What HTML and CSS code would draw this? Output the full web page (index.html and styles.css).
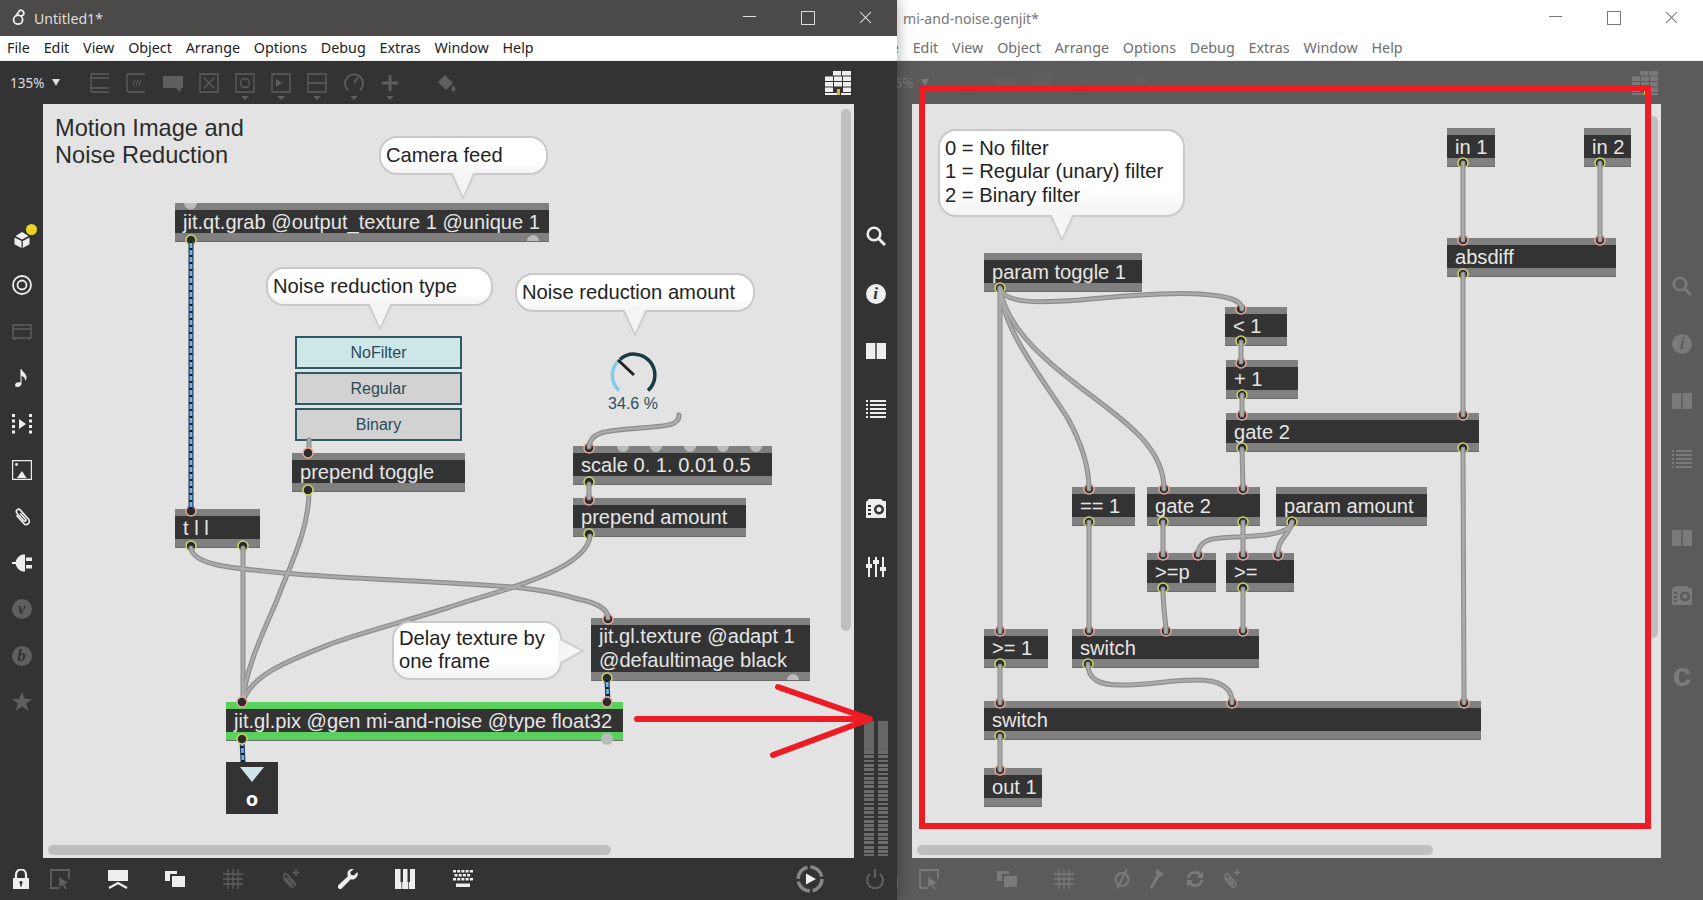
FILE: index.html
```html
<!DOCTYPE html>
<html lang="en">
<head>
    <meta charset="UTF-8">
    <title>Untitled1* - mi-and-noise.genjit*</title>
    <link rel="stylesheet" href="styles.css">
</head>
<body>
    <!-- icon set, reused by both patcher windows -->
    <svg class="icon-defs" aria-hidden="true">
        <symbol id="i-logo" viewBox="0 0 20 20"><circle class="ln" cx="9" cy="13" r="5" stroke-width="2"/><path class="ln" stroke-width="2" d="M6 9.500 11 2.500A3.500 3.500 0 0 1 15 7.500L12 9.500"/></symbol>
        <symbol id="i-cube" viewBox="0 0 20 20"><path d="M3.5 7 10 3l6.5 4L10 10.5zM2.5 8.5l7 3.5v7l-7-3.800zM10.800 12l6.700-3.500v6.700L10.800 19z"/></symbol>
        <symbol id="i-target" viewBox="0 0 20 20"><circle class="ln" cx="10" cy="10" r="9" stroke-width="1.8"/><circle class="ln" cx="10" cy="10" r="4.5" stroke-width="1.8"/></symbol>
        <symbol id="i-amp" viewBox="0 0 20 20"><path class="ln" stroke-width="1.5" d="M1 3h18v13H1zM1 7h18M3 16v2M17 16v2"/></symbol>
        <symbol id="i-note" viewBox="0 0 20 20"><path d="M8.5 1h1c.5 3 5.500 4.500 5 9-.2 1.500-.7 2.500-1.300 3 .5-3-2-4.500-3.700-5.200V15.500c0 2-2 3.500-4 3.500-1.500 0-2.500-.8-2.500-2 0-1.800 2.500-3.300 5.500-2.500z"/></symbol>
        <symbol id="i-video" viewBox="0 0 20 20"><path d="M0 0h3v3H0zM0 5.500h3v3H0zM0 11h3v3H0zM0 16.500h3v3H0zM17 0h3v3h-3zM17 5.500h3v3h-3zM17 11h3v3h-3zM17 16.500h3v3h-3zM7 5l7 5-7 5z"/></symbol>
        <symbol id="i-image" viewBox="0 0 20 20"><path class="ln" stroke-width="1.2" d="M.6.6h18.800v18.800H.6z"/><circle cx="4.5" cy="4.5" r="1.4"/><path d="M5 18h9.500l-4.500-7z"/></symbol>
        <symbol id="i-clip" viewBox="0 0 20 20"><path class="ln" stroke-width="1.6" transform="rotate(-42 10 10)" d="M7 5v11a3.200 3.200 0 0 0 6.400 0V3.800a2.300 2.300 0 0 0-4.600 0V14a1.200 1.200 0 0 0 2.400 0V6"/></symbol>
        <symbol id="i-plug" viewBox="0 0 20 20"><path d="M0 9h3.500c1-3.500 3.500-6.500 7-7.500H13v17h-2.500c-3.500-1-6-4-7-7.500H0zM14 4.500h6V8h-6zM14 12h6v3.500h-6z"/></symbol>
        <symbol id="i-star" viewBox="0 0 20 20"><path d="M10 0l2.800 7H20l-5.800 4.500 2.200 7.500L10 14.600 3.600 19l2.200-7.500L0 7h7.200z"/></symbol>
        <symbol id="i-search" viewBox="0 0 20 20"><circle class="ln" cx="8" cy="8" r="6.3" stroke-width="2.6"/><path class="ln" stroke-width="3" d="M12.500 12.500 19 19"/></symbol>
        <symbol id="i-book" viewBox="0 0 20 20"><path d="M0 2h9.300v16H0zM10.700 2H20v16h-9.300z"/></symbol>
        <symbol id="i-list" viewBox="0 0 20 20"><path d="M0 1h2v2H0zM4 1h16v2H4zM0 5h2v2H0zM4 5h16v2H4zM0 9h2v2H0zM4 9h16v2H4zM0 13h2v2H0zM4 13h16v2H4zM0 17h2v2H0zM4 17h16v2H4z"/></symbol>
        <symbol id="i-camera" viewBox="0 0 20 20"><path fill-rule="evenodd" d="M3 0h12l2 2h3v17H0V3zM13 5.500a5 5 0 1 0 .01 0zM13 8a2.500 2.500 0 1 1-.01 0zM2 6h3v2H2zM2 10h3v2H2zM2 14h3v2H2z"/></symbol>
        <symbol id="i-sliders" viewBox="0 0 20 20"><path d="M2 0h2v7h2v4H4v9H2v-9H0V7h2zM9 0h2v3h2v4h-2v13H9V7H7V3h2zM16 0h2v10h2v4h-2v6h-2v-6h-2v-4h2z"/></symbol>
        <symbol id="i-lock" viewBox="0 0 20 20"><path class="ln" stroke-width="2.2" d="M5 10V5.500a5 5 0 0 1 10 0V10"/><path fill-rule="evenodd" d="M2 9h16v11H2zM10 12a1.600 1.600 0 0 0-.8 3v2.500h1.600V15a1.600 1.600 0 0 0-.8-3z"/></symbol>
        <symbol id="i-select" viewBox="0 0 20 20"><path class="ln" stroke-width="1.8" d="M9 19H1V1h18v9"/><path d="M9 8l9 6-4 1 3 5-2 .5-2.500-5-3 3z"/></symbol>
        <symbol id="i-present" viewBox="0 0 20 20"><path d="M0 1h20v11H0z"/><path class="ln" stroke-width="2.2" d="M1 19l9-5 9 5"/></symbol>
        <symbol id="i-overlap" viewBox="0 0 20 20"><path d="M0 2h12v3H5v7H0zM7 7h13v11H7z"/></symbol>
        <symbol id="i-grid" viewBox="0 0 20 20"><path class="ln" stroke-width="1.3" d="M5 0v20M10 0v20M15 0v20M0 5h20M0 10h20M0 15h20"/></symbol>
        <symbol id="i-clipadd" viewBox="0 0 20 20"><path class="ln" stroke-width="1.5" transform="rotate(-42 9 12)" d="M6.500 7v9.500a2.800 2.800 0 0 0 5.600 0V6a2 2 0 0 0-4 0v9.500a1 1 0 0 0 2 0V8"/><path class="ln" stroke-width="1.5" d="M16 0v7M12.500 3.500h7"/></symbol>
        <symbol id="i-wrench" viewBox="0 0 20 20"><path d="M19.500 3l-3.700 3.500-2.800-.7-.8-2.800L15.700.3c-3.400-1-6.700 1.700-6.200 5.200 0 .7.200 1.300.4 1.800L.6 16a2.300 2.300 0 0 0 3.300 3.300l8.800-9c3.800 1.400 8.300-2.700 6.800-7.300z"/></symbol>
        <symbol id="i-piano" viewBox="0 0 20 20"><path d="M0 0h5.500v13h1v7H0zM8 0h4.500v13h.5v7H7.200v-7h.8zM15 0h5v20h-6.300v-7H15z"/></symbol>
        <symbol id="i-keys" viewBox="0 0 20 20"><path d="M0 1h3v2.500H0zM4.200 1h3v2.500h-3zM8.400 1h3v2.500h-3zM12.600 1h3v2.500h-3zM16.800 1H20v2.500h-3.200zM1.500 5h3v2.500h-3zM5.700 5h3v2.500h-3zM9.900 5h3v2.500h-3zM14.100 5h3v2.500h-3zM0 9h3v2.500H0zM4.200 9h3v2.500h-3zM8.400 9h3v2.500h-3zM12.600 9h3v2.500h-3zM16.800 9H20v2.500h-3.200zM3 14.500h14V18H3z"/></symbol>
        <symbol id="i-playring" viewBox="0 0 28 28"><circle class="ln" cx="14" cy="14" r="12" stroke-width="3.5" stroke-dasharray="16 2.8" opacity=".45"/><path class="bright" d="M10 8.500l10 5.500-10 5.500z"/></symbol>
        <symbol id="i-power" viewBox="0 0 20 20"><path class="ln" stroke-width="2.2" d="M5 5a8 8 0 1 0 10 0M10 0v9"/></symbol>
        <symbol id="i-obj" viewBox="0 0 20 20"><path class="ln" stroke-width="1.3" d="M1 1h18M1 5h18M1 15h18M1 19h18M1 1v18"/></symbol>
        <symbol id="i-msg" viewBox="0 0 20 20"><path class="ln" stroke-width="1.3" d="M19 1H3Q1 1 1 3v14q0 2 2 2h16"/><path class="ln" stroke-width="1" d="M7 13l2-6M10 13l2-6M13 13l2-6"/></symbol>
        <symbol id="i-comment" viewBox="0 0 20 20"><path d="M0 3h20v12h-2l-1 4-4-4H0z"/></symbol>
        <symbol id="i-toggle" viewBox="0 0 20 20"><path class="ln" stroke-width="1.3" d="M1 1h18v18H1zM4.500 4.500l11 11M15.500 4.500l-11 11"/></symbol>
        <symbol id="i-button" viewBox="0 0 20 20"><path class="ln" stroke-width="1.3" d="M1 1h18v18H1z"/><circle class="ln" cx="10" cy="10" r="4.5" stroke-width="1.3"/></symbol>
        <symbol id="i-play" viewBox="0 0 20 20"><path class="ln" stroke-width="1.3" d="M1 1h18v18H1z"/><path d="M5 6l6 4-6 4z"/></symbol>
        <symbol id="i-minus" viewBox="0 0 20 20"><path class="ln" stroke-width="1.3" d="M1 1h18v18H1zM1 10h18"/></symbol>
        <symbol id="i-dial" viewBox="0 0 20 20"><path class="ln" stroke-width="1.8" d="M4 17A9 9 0 1 1 16 17M10 10l4-6"/></symbol>
        <symbol id="i-plus" viewBox="0 0 20 20"><path class="ln" stroke-width="3" d="M10 2v16M2 10h16"/></symbol>
        <symbol id="i-bucket" viewBox="0 0 20 20"><path d="M8 2l8 8-7 7-8-8zM16 12c1.500 2 2.500 3.500 2.500 4.500a2 2 0 0 1-4 0c0-1 .5-2.500 1.500-4.500z"/></symbol>
        <symbol id="i-mute" viewBox="0 0 20 20"><circle class="ln" cx="10" cy="10.5" r="6.5" stroke-width="2.2"/><path class="ln" stroke-width="2" d="M15 0 5 20"/></symbol>
        <symbol id="i-hammer" viewBox="0 0 20 20"><path d="M9 0l7 5-3 3-1.200-.8L4 20l-2.500-1.500L9 5.500 7 4z"/></symbol>
        <symbol id="i-sync" viewBox="0 0 20 20"><path class="ln" stroke-width="2.6" d="M3 9a7 7 0 0 1 13-2M17 11a7 7 0 0 1-13 2"/><path d="M18 2v7h-6zM2 18v-7h6z"/></symbol>
        <symbol id="i-gridlist" viewBox="0 0 26 24"><path d="M8 0h8v4.500H8zM17 0h9v4.500h-9zM0 5.500h8V10H0zM9 5.500h8V10H9zM18 5.500h8V10h-8zM0 11h8v4.500H0zM9 11h8v4.500H9zM18 11h8v4.500h-8zM0 16.500h8V21H0zM18 16.500h8V21h-8zM0 22h12v2H0zM16 22h10v2H16z"/><path class="badge" d="M12 18h3v6h-3z"/></symbol>
    </svg>

    <!-- main patcher -->
    <div class="window window-main">
        <div class="titlebar">
            <svg class="logo"><use href="#i-logo"/></svg>
            <span class="title">Untitled1*</span>
            <div class="winbtns">
                <span class="winbtn win-min"></span>
                <span class="winbtn win-max"></span>
                <span class="winbtn win-close"></span>
            </div>
        </div>
        <div class="menubar">
            <span>File</span><span>Edit</span><span>View</span><span>Object</span><span>Arrange</span><span>Options</span><span>Debug</span><span>Extras</span><span>Window</span><span>Help</span>
        </div>
        <div class="toolbar">
            <div class="zoom-level">135% <i class="caret"></i></div>
            <div class="tool"><svg><use href="#i-obj"/></svg></div>
            <div class="tool"><svg><use href="#i-msg"/></svg></div>
            <div class="tool"><svg><use href="#i-comment"/></svg></div>
            <div class="tool"><svg><use href="#i-toggle"/></svg></div>
            <div class="tool more"><svg><use href="#i-button"/></svg></div>
            <div class="tool more"><svg><use href="#i-play"/></svg></div>
            <div class="tool more"><svg><use href="#i-minus"/></svg></div>
            <div class="tool more"><svg><use href="#i-dial"/></svg></div>
            <div class="tool more"><svg><use href="#i-plus"/></svg></div>
            <div class="tool tool-bucket"><svg><use href="#i-bucket"/></svg></div>
            <svg class="gridlist"><use href="#i-gridlist"/></svg>
        </div>
        <div class="middle">
            <div class="sidebar sidebar-left">
                <div class="side-icon cube"><svg><use href="#i-cube"/></svg><i class="dot"></i></div>
                <div class="side-icon"><svg><use href="#i-target"/></svg></div>
                <div class="side-icon off"><svg><use href="#i-amp"/></svg></div>
                <div class="side-icon"><svg><use href="#i-note"/></svg></div>
                <div class="side-icon"><svg><use href="#i-video"/></svg></div>
                <div class="side-icon"><svg><use href="#i-image"/></svg></div>
                <div class="side-icon"><svg><use href="#i-clip"/></svg></div>
                <div class="side-icon"><svg><use href="#i-plug"/></svg></div>
                <div class="side-icon badge-letter">v</div>
                <div class="side-icon badge-letter">b</div>
                <div class="side-icon off"><svg><use href="#i-star"/></svg></div>
            </div>

            <div class="canvas canvas-main">
                <div class="obj o-grab">jit.qt.grab @output_texture 1 @unique 1</div>
                <div class="obj o-trig">t l l</div>
                <div class="obj o-ptoggle">prepend toggle</div>
                <div class="obj o-pamount">prepend amount</div>
                <div class="obj o-scale">scale 0. 1. 0.01 0.5</div>
                <div class="obj o-texture">jit.gl.texture @adapt 1<br>@defaultimage black</div>
                <div class="obj o-pix">jit.gl.pix @gen mi-and-noise @type float32</div>
                <div class="tabs">
                    <div class="tab tab-on">NoFilter</div>
                    <div class="tab">Regular</div>
                    <div class="tab">Binary</div>
                </div>
                <div class="pwin"><i class="pwin-arrow"></i><span>o</span></div>

                <svg class="cords" viewBox="43 104 811 754">
                    <defs>
                        <g id="cords-main">
                            <path d="M191 548C193 565 230 568 283 573S400 580 450 583 540 587 578 599C598 603 608 610 608 618"/>
                            <path d="M243 548V702"/>
                            <path d="M309 491C309 530 290 565 277 600 262 635 245 670 243 702"/>
                            <path d="M590 536C588 558 550 575 513 587 490 595 470 600 450 607 410 620 370 630 333 643 290 660 250 675 243 702"/>
                            <path d="M679 415C680 427 660 426 640 428 610 431 590 430 589 447"/>
                            <path d="M589 484V498"/>
                            <path d="M309 440V453"/>
                        </g>
                        <g id="jitter-main">
                            <path d="M191 241V509"/>
                            <path d="M607 680 608 702"/>
                            <path d="M242 739 243 762"/>
                        </g>
                    </defs>
                    <path class="handle" d="M184 203a6.500 6.500 0 0 0 13 0zM527 241a6 6 0 0 1 12 0zM617 446a6 6 0 0 0 12 0zM650 446a6 6 0 0 0 12 0zM684 446a6 6 0 0 0 12 0zM717 446a6 6 0 0 0 12 0zM750 446a6 6 0 0 0 12 0zM787 680a6 6 0 0 1 12 0z"/>
                    <circle class="handle" cx="607" cy="739" r="6"/>
                    <circle class="pin" cx="191" cy="511" r="5"/>
                    <circle class="pout" cx="191" cy="240" r="5"/>
                    <circle class="pout" cx="191" cy="546" r="5"/>
                    <circle class="pout" cx="243" cy="546" r="5"/>
                    <circle class="pin" cx="589" cy="448" r="5"/>
                    <circle class="pout" cx="589" cy="482" r="5"/>
                    <circle class="pin" cx="589" cy="500" r="5"/>
                    <circle class="pout" cx="589" cy="534" r="5"/>
                    <circle class="pin" cx="608" cy="619" r="5"/>
                    <circle class="pout" cx="607" cy="678" r="5"/>
                    <use href="#cords-main" class="cord-outer"/>
                    <use href="#cords-main" class="cord-inner"/>
                    <use href="#jitter-main" class="jit-outer"/>
                    <use href="#jitter-main" class="jit-inner"/>
                    <use href="#jitter-main" class="jit-dash"/>
                    <circle class="pin" cx="308" cy="453" r="5"/>
                    <circle class="pout" cx="308" cy="490" r="5"/>
                    <circle class="pin" cx="242" cy="702" r="5"/>
                    <circle class="pout" cx="242" cy="739" r="5"/>
                    <circle class="pin" cx="607" cy="702" r="5"/>

                    <path class="dial-track" d="M620 359.500A20.500 20.500 0 0 1 648 390.500"/>
                    <path class="dial-value" d="M619 390.500A20.500 20.500 0 0 1 620 359.500"/>
                    <path class="dial-needle" d="M618 360 634 375"/>
                    <text class="dial-text" x="633" y="409" text-anchor="middle">34.6 %</text>
                </svg>

                <div class="patch-title">Motion Image and<br>Noise Reduction</div>
                <div class="bubble b-camera">Camera feed</div>
                <div class="bubble b-type">Noise reduction type</div>
                <div class="bubble b-amount">Noise reduction amount</div>
                <div class="bubble b-delay">Delay texture by<br>one frame</div>

                <div class="scroll-v"></div>
                <div class="scroll-h"></div>
            </div>

            <div class="sidebar sidebar-right">
                <div class="side-icon"><svg><use href="#i-search"/></svg></div>
                <div class="side-icon info">i</div>
                <div class="side-icon"><svg><use href="#i-book"/></svg></div>
                <div class="side-icon"><svg><use href="#i-list"/></svg></div>
                <div class="side-icon after-break"><svg><use href="#i-camera"/></svg></div>
                <div class="side-icon"><svg><use href="#i-sliders"/></svg></div>
                <div class="meter"><i></i><i></i></div>
            </div>
        </div>
        <div class="bottombar">
            <svg class="bot"><use href="#i-lock"/></svg>
            <svg class="bot off bot-select"><use href="#i-select"/></svg>
            <svg class="bot"><use href="#i-present"/></svg>
            <svg class="bot"><use href="#i-overlap"/></svg>
            <svg class="bot off"><use href="#i-grid"/></svg>
            <svg class="bot off"><use href="#i-clipadd"/></svg>
            <svg class="bot"><use href="#i-wrench"/></svg>
            <svg class="bot"><use href="#i-piano"/></svg>
            <svg class="bot"><use href="#i-keys"/></svg>
            <svg class="bot-play"><use href="#i-playring"/></svg>
            <svg class="bot off bot-power"><use href="#i-power"/></svg>
        </div>
    </div>

    <!-- gen patcher, behind the main one -->
    <div class="window window-gen">
        <div class="titlebar">
            <span class="title">mi-and-noise.genjit*</span>
            <div class="winbtns">
                <span class="winbtn win-min"></span>
                <span class="winbtn win-max"></span>
                <span class="winbtn win-close"></span>
            </div>
        </div>
        <div class="menubar">
            <span>File</span><span>Edit</span><span>View</span><span>Object</span><span>Arrange</span><span>Options</span><span>Debug</span><span>Extras</span><span>Window</span><span>Help</span>
        </div>
        <div class="toolbar">
            <div class="zoom-level">135% <i class="caret"></i></div>
            <div class="tool"><svg><use href="#i-obj"/></svg></div>
            <div class="tool"><svg viewBox="0 0 20 20"><path d="M0 4h20v12H0z"/></svg></div>
            <div class="tool"><svg viewBox="0 0 20 20"><path fill-rule="evenodd" d="M0 0h20v18H0zM5 3h2v2H5zM13 3h2v2h-2z"/></svg></div>
            <div class="tool"><svg viewBox="0 0 20 20"><path class="ln" stroke-width="1.3" d="M1 1h18v18H1z"/><text class="co" x="10" y="10" text-anchor="middle">CO</text></svg></div>
            <div class="tool tool-bucket gen-bucket"><svg><use href="#i-bucket"/></svg></div>
            <svg class="gridlist"><use href="#i-gridlist"/></svg>
        </div>
        <div class="middle">
            <div class="sidebar sidebar-left"></div>

            <div class="canvas canvas-gen">
                <div class="obj g-ptoggle">param toggle 1</div>
                <div class="obj g-in1">in 1</div>
                <div class="obj g-in2">in 2</div>
                <div class="obj g-absdiff">absdiff</div>
                <div class="obj g-lt">&lt; 1</div>
                <div class="obj g-plus">+ 1</div>
                <div class="obj g-gatelong">gate 2</div>
                <div class="obj g-eq">== 1</div>
                <div class="obj g-gate">gate 2</div>
                <div class="obj g-pamount">param amount</div>
                <div class="obj g-gep">&gt;=p</div>
                <div class="obj g-ge">&gt;=</div>
                <div class="obj g-ge1">&gt;= 1</div>
                <div class="obj g-switch">switch</div>
                <div class="obj g-switchlong">switch</div>
                <div class="obj g-out">out 1</div>

                <svg class="cords" viewBox="912 104 749 754">
                    <defs>
                        <g id="cords-gen">
                            <path d="M1000 288V632"/>
                            <path d="M1000 288C1003 330 1040 375 1067 417 1080 440 1089 465 1089 489"/>
                            <path d="M1000 288C1006 330 1050 365 1093 397 1130 425 1164 450 1164 489"/>
                            <path d="M1000 288C1004 304 1040 303 1080 300 1120 296 1170 292 1200 294 1228 296 1242 300 1242 309"/>
                            <path d="M1241 342V362"/>
                            <path d="M1242 395V415"/>
                            <path d="M1242 449 1243 489"/>
                            <path d="M1463 163V240"/>
                            <path d="M1600 163V240"/>
                            <path d="M1463 274V415"/>
                            <path d="M1463 449 1464 703"/>
                            <path d="M1089 522V631"/>
                            <path d="M1163 522V555"/>
                            <path d="M1243 522V555"/>
                            <path d="M1292 522C1290 538 1240 536 1220 538 1204 539 1198 545 1198 555"/>
                            <path d="M1292 522C1290 535 1276 540 1278 555"/>
                            <path d="M1163 589C1163 610 1166 620 1166 632"/>
                            <path d="M1243 589V631"/>
                            <path d="M1088 664C1088 680 1100 685 1120 685 1150 685 1170 680 1197 680 1220 680 1233 688 1232 703"/>
                            <path d="M1000 666V703"/>
                            <path d="M1000 736V770"/>
                        </g>
                    </defs>
                    <circle class="pout" cx="1000" cy="288" r="5"/>
                    <circle class="pin" cx="1241" cy="309" r="5"/>
                    <circle class="pout" cx="1241" cy="341" r="5"/>
                    <circle class="pin" cx="1241" cy="363" r="5"/>
                    <circle class="pout" cx="1242" cy="395" r="5"/>
                    <circle class="pin" cx="1242" cy="415" r="5"/>
                    <circle class="pin" cx="1463" cy="415" r="5"/>
                    <circle class="pout" cx="1242" cy="448" r="5"/>
                    <circle class="pout" cx="1463" cy="448" r="5"/>
                    <circle class="pout" cx="1463" cy="163" r="5"/>
                    <circle class="pout" cx="1600" cy="163" r="5"/>
                    <circle class="pin" cx="1463" cy="240" r="5"/>
                    <circle class="pin" cx="1600" cy="240" r="5"/>
                    <circle class="pout" cx="1463" cy="274" r="5"/>
                    <circle class="pin" cx="1089" cy="489" r="5"/>
                    <circle class="pin" cx="1164" cy="489" r="5"/>
                    <circle class="pin" cx="1243" cy="489" r="5"/>
                    <circle class="pout" cx="1089" cy="522" r="5"/>
                    <circle class="pout" cx="1163" cy="522" r="5"/>
                    <circle class="pout" cx="1243" cy="522" r="5"/>
                    <circle class="pout" cx="1292" cy="522" r="5"/>
                    <circle class="pin" cx="1163" cy="555" r="5"/>
                    <circle class="pin" cx="1198" cy="555" r="5"/>
                    <circle class="pin" cx="1243" cy="555" r="5"/>
                    <circle class="pin" cx="1278" cy="555" r="5"/>
                    <circle class="pout" cx="1163" cy="588" r="5"/>
                    <circle class="pout" cx="1243" cy="588" r="5"/>
                    <circle class="pin" cx="1000" cy="631" r="5"/>
                    <circle class="pin" cx="1089" cy="631" r="5"/>
                    <circle class="pin" cx="1166" cy="631" r="5"/>
                    <circle class="pin" cx="1243" cy="631" r="5"/>
                    <circle class="pout" cx="1000" cy="664" r="5"/>
                    <circle class="pout" cx="1088" cy="664" r="5"/>
                    <circle class="pin" cx="1000" cy="703" r="5"/>
                    <circle class="pin" cx="1232" cy="703" r="5"/>
                    <circle class="pin" cx="1464" cy="703" r="5"/>
                    <circle class="pout" cx="1000" cy="736" r="5"/>
                    <circle class="pin" cx="1000" cy="770" r="5"/>
                    <use href="#cords-gen" class="cord-outer"/>
                    <use href="#cords-gen" class="cord-inner"/>
                </svg>

                <div class="bubble b-filter">0 = No filter<br>1 = Regular (unary) filter<br>2 = Binary filter</div>

                <div class="scroll-v"></div>
                <div class="scroll-h"></div>
            </div>

            <div class="sidebar sidebar-right">
                <div class="side-icon"><svg><use href="#i-search"/></svg></div>
                <div class="side-icon info">i</div>
                <div class="side-icon"><svg><use href="#i-book"/></svg></div>
                <div class="side-icon"><svg><use href="#i-list"/></svg></div>
                <div class="side-icon after-break"><svg><use href="#i-book"/></svg></div>
                <div class="side-icon"><svg><use href="#i-camera"/></svg></div>
                <div class="side-icon after-break c-letter">c</div>
            </div>
        </div>
        <div class="bottombar">
            <svg class="bot"><use href="#i-lock"/></svg>
            <svg class="bot bot-select"><use href="#i-select"/></svg>
            <svg class="bot gen-overlap"><use href="#i-overlap"/></svg>
            <svg class="bot"><use href="#i-grid"/></svg>
            <svg class="bot"><use href="#i-mute"/></svg>
            <svg class="bot gen-tight"><use href="#i-hammer"/></svg>
            <svg class="bot gen-tight"><use href="#i-sync"/></svg>
            <svg class="bot gen-tight"><use href="#i-clipadd"/></svg>
        </div>
    </div>

    <!-- red annotations drawn on top of the screenshot -->
    <svg class="annotations" viewBox="0 0 1703 900">
        <rect class="red-frame" x="922" y="88" width="726" height="738"/>
        <path class="red-arrow" d="M637 719H870M778 687 870 719 773 755"/>
    </svg>
</body>
</html>
```
FILE: styles.css
```css
* {
    box-sizing: border-box;
}

body {
    margin: 0;
    width: 1703px;
    height: 900px;
    display: flex;
    position: relative;
    overflow: hidden;
    font-family: "Liberation Sans", Arial, sans-serif;
    background: #5b5b5b;
}

.icon-defs {
    position: absolute;
    width: 0;
    height: 0;
}

.ln {
    fill: none;
    stroke: currentColor;
}

/* windows */
.window {
    height: 900px;
    display: flex;
    flex-direction: column;
    flex: none;
}

.window-main {
    width: 897px;
    position: relative;
    z-index: 2;
    color: #eee;
    background: #333;
    box-shadow: 0 0 14px rgba(0, 0, 0, 0.35);
}

.window-gen {
    width: 834px;
    margin-left: -28px;
    color: #7a7a7a;
    background: #5b5b5b;
}

.titlebar {
    height: 36px;
    display: flex;
    align-items: center;
    padding-left: 34px;
    position: relative;
    font-family: "Noto Sans", sans-serif;
    font-size: 14.1px;
}

.window-main .titlebar {
    background: #4c4a48;
    color: #ddd;
}

.window-gen .titlebar {
    background: #fff;
    color: #777;
}

.logo {
    position: absolute;
    left: 10px;
    top: 8px;
    width: 18px;
    height: 18px;
    color: #eee;
}

.winbtns {
    margin-left: auto;
    display: flex;
    padding-right: 2px;
}

.winbtn {
    width: 58px;
    height: 36px;
    display: block;
    position: relative;
}

.winbtn::before,
.winbtn::after {
    content: "";
    position: absolute;
}

.win-min::before {
    left: 22px;
    top: 16px;
    width: 13px;
    height: 1px;
    background: currentColor;
}

.win-max::before {
    left: 22px;
    top: 11px;
    width: 12px;
    height: 12px;
    border: 1px solid currentColor;
}

.win-close::before,
.win-close::after {
    left: 21px;
    top: 17px;
    width: 15px;
    height: 1px;
    background: currentColor;
    transform: rotate(45deg);
}

.win-close::after {
    transform: rotate(-45deg);
}

.menubar {
    height: 25px;
    display: flex;
    align-items: center;
    gap: 13.8px;
    padding: 0 0 2px 7px;
    background: #fff;
    border-bottom: 1px solid #eee;
    font-family: "Noto Sans", sans-serif;
    font-size: 14.3px;
    color: #222;
    white-space: nowrap;
}

.window-gen .menubar {
    color: #6e6e6e;
}

/* toolbar */
.toolbar {
    height: 43px;
    display: flex;
    align-items: center;
    gap: 16.2px;
    color: #5f5f5f;
    position: relative;
}

.zoom-level {
    width: 74px;
    padding-left: 10px;
    font-family: "Noto Sans", sans-serif;
    font-size: 13.5px;
    color: #ddd;
    display: flex;
    align-items: center;
    gap: 8px;
}

.window-gen .zoom-level {
    color: #7a7a7a;
}

.caret {
    width: 0;
    height: 0;
    border-left: 4px solid transparent;
    border-right: 4px solid transparent;
    border-top: 7px solid currentColor;
}

.tool {
    width: 20px;
    height: 20px;
    position: relative;
    flex: none;
}

.tool svg {
    width: 20px;
    height: 20px;
    display: block;
    fill: currentColor;
}

.tool.more::after {
    content: "";
    position: absolute;
    left: 6px;
    top: 23px;
    border-left: 4px solid transparent;
    border-right: 4px solid transparent;
    border-top: 4px solid currentColor;
}

.tool-bucket {
    margin-left: 21px;
}

.gen-bucket {
    margin-left: 27px;
    margin-top: -6px;
}

.co {
    font-size: 8px;
    fill: currentColor;
}

.gridlist {
    position: absolute;
    right: 46px;
    top: 10px;
    width: 26px;
    height: 24px;
    fill: #eee;
}

.window-gen .gridlist {
    right: 45px;
    fill: #7a7a7a;
}

.badge {
    fill: #d9b92f;
}

.window-gen .badge {
    fill: #7a7a7a;
}

/* middle row */
.middle {
    flex: 1;
    display: flex;
    min-height: 0;
}

.sidebar {
    flex: none;
    display: flex;
    flex-direction: column;
    align-items: center;
}

.sidebar-left {
    width: 43px;
    padding-top: 125px;
    gap: 26.3px;
}

.sidebar-right {
    width: 43px;
    padding-top: 122px;
    gap: 37.5px;
}

.window-gen .sidebar-right {
    width: 42px;
    padding-top: 172px;
}

.side-icon {
    width: 20px;
    height: 20px;
    position: relative;
    flex: none;
}

.side-icon svg {
    width: 20px;
    height: 20px;
    display: block;
    fill: currentColor;
}

.side-icon.off {
    color: #5f5f5f;
}

.after-break {
    margin-top: 43px;
}

.window-gen .after-break {
    margin-top: 22px;
}

.dot {
    position: absolute;
    right: -5px;
    top: -5px;
    width: 11px;
    height: 11px;
    border-radius: 50%;
    background: #eed21f;
}

.badge-letter {
    border-radius: 50%;
    background: #5f5f5f;
    color: #333;
    font: italic bold 17px/19px "Liberation Serif", serif;
    text-align: center;
}

.info {
    border-radius: 50%;
    background: #eee;
    color: #333;
    font: italic bold 17px/20px "Liberation Serif", serif;
    text-align: center;
}

.window-gen .info {
    background: #7a7a7a;
    color: #5b5b5b;
}

.c-letter {
    font: bold 34px/18px "Liberation Sans", sans-serif;
    text-align: center;
}

.meter {
    margin-top: auto;
    margin-bottom: 2px;
    display: flex;
    gap: 4px;
}

.meter i {
    display: block;
    width: 10px;
    height: 135px;
    background:
        linear-gradient(#666 30px, transparent 30px),
        repeating-linear-gradient(#6c6c6c 0, #6c6c6c 2.8px, #333 2.8px, #333 4.3px);
}

/* canvas */
.canvas {
    flex: 1;
    position: relative;
    background: #e3e3e3;
    overflow: hidden;
}

.scroll-v {
    position: absolute;
    right: 3px;
    top: 5px;
    width: 10px;
    height: 522px;
    border-radius: 5px;
    background: #bfbfbf;
}

.scroll-h {
    position: absolute;
    left: 5px;
    bottom: 3px;
    width: 563px;
    height: 10px;
    border-radius: 5px;
    background: #bfbfbf;
}

.canvas-gen .scroll-v {
    top: 12px;
}

.canvas-gen .scroll-h {
    width: 516px;
}

.cords {
    position: absolute;
    left: 0;
    top: 0;
    width: 100%;
    height: 100%;
}

.cords path {
    fill: none;
}

.cord-outer {
    stroke: #8d8d8d;
    stroke-width: 5px;
    fill: none;
    stroke-linecap: round;
}

.cord-inner {
    stroke: #ababab;
    stroke-width: 2.6px;
    fill: none;
    stroke-linecap: round;
}

.jit-outer {
    stroke: #1f3f60;
    stroke-width: 5px;
    fill: none;
}

.jit-inner {
    stroke: #7db3e4;
    stroke-width: 2.6px;
    fill: none;
}

.jit-dash {
    stroke: #0c1826;
    stroke-width: 3px;
    stroke-dasharray: 2 5;
    fill: none;
}

.pin {
    fill: #2b2b2b;
    stroke: #e9a79b;
    stroke-width: 1.5px;
}

.pout {
    fill: #2b2b2b;
    stroke: #cfd56a;
    stroke-width: 1.5px;
}

.cords .handle {
    fill: #b9bcbb;
}

.dial-track {
    stroke: #173a44;
    stroke-width: 3.5px;
}

.dial-value {
    stroke: #7fcbe8;
    stroke-width: 3.5px;
}

.dial-needle {
    stroke: #222;
    stroke-width: 3px;
}

.dial-text {
    font-size: 16px;
    fill: #2f4f5c;
}

/* patcher objects */
.obj {
    position: absolute;
    background: #333;
    border-top: 7px solid #808080;
    border-bottom: 8px solid #808080;
    box-shadow: 0 1px 0 #6a6a6a;
    padding: 2px 0 0 8px;
    font-size: 20.1px;
    line-height: 21px;
    color: #e6e6e6;
    white-space: nowrap;
}

.o-grab { left: 132px; top: 99px; width: 374px; }
.o-trig { left: 132px; top: 405px; width: 85px; }
.o-ptoggle { left: 249px; top: 349px; width: 173px; }
.o-pamount { left: 530px; top: 394px; width: 173px; }
.o-scale { left: 530px; top: 342px; width: 199px; }
.o-texture { left: 548px; top: 514px; width: 219px; padding-top: 0; line-height: 23.5px; }
.o-pix { left: 183px; top: 598px; width: 397px; border-color: #5ad05f; }

.g-ptoggle { left: 72px; top: 149px; width: 158px; }
.g-in1 { left: 535px; top: 24px; width: 48px; }
.g-in2 { left: 672px; top: 24px; width: 47px; }
.g-absdiff { left: 535px; top: 134px; width: 169px; }
.g-lt { left: 313px; top: 203px; width: 62px; }
.g-plus { left: 314px; top: 256px; width: 72px; }
.g-gatelong { left: 314px; top: 309px; width: 253px; }
.g-eq { left: 160px; top: 383px; width: 63px; }
.g-gate { left: 235px; top: 383px; width: 113px; }
.g-pamount { left: 364px; top: 383px; width: 151px; }
.g-gep { left: 235px; top: 449px; width: 69px; }
.g-ge { left: 314px; top: 449px; width: 68px; }
.g-ge1 { left: 72px; top: 525px; width: 64px; }
.g-switch { left: 160px; top: 525px; width: 187px; }
.g-switchlong { left: 72px; top: 597px; width: 497px; }
.g-out { left: 72px; top: 664px; width: 58px; }

.tabs {
    position: absolute;
    left: 252px;
    top: 232px;
    width: 167px;
    display: flex;
    flex-direction: column;
    gap: 3.5px;
}

.tab {
    height: 32.5px;
    border: 2px solid #2d5a63;
    background: #d2d2d2;
    color: #2c4a55;
    font-size: 16px;
    line-height: 30px;
    text-align: center;
}

.tab-on {
    background: #cde6e8;
}

.pwin {
    position: absolute;
    left: 183px;
    top: 658px;
    width: 52px;
    height: 52px;
    background: #333;
    color: #fff;
    font: bold 20px/1 "Noto Sans", sans-serif;
    text-align: center;
}

.pwin span {
    display: block;
    margin-top: 7px;
}

.pwin-arrow {
    display: block;
    width: 0;
    height: 0;
    margin: 5px auto 0;
    border-left: 12.5px solid transparent;
    border-right: 12.5px solid transparent;
    border-top: 15px solid #cde5e8;
}

.patch-title {
    position: absolute;
    left: 12px;
    top: 11px;
    font-size: 23.6px;
    line-height: 27px;
    color: #2b2b2b;
    white-space: nowrap;
}

/* comment bubbles */
.bubble {
    position: absolute;
    background: linear-gradient(#fff 70%, #f3f3f3);
    border: 2px solid #c9c9c9;
    border-radius: 18px;
    padding: 6px 5px;
    font-size: 20.2px;
    line-height: 23px;
    color: #222;
    white-space: nowrap;
    --tail: 70px;
}

.bubble::before,
.bubble::after {
    content: "";
    position: absolute;
    left: var(--tail);
    top: 100%;
    border-left: 13px solid transparent;
    border-right: 13px solid transparent;
    border-top: 27px solid #cfcfcf;
}

.bubble::after {
    left: calc(var(--tail) + 2px);
    margin-top: -2px;
    border-left-width: 11px;
    border-right-width: 11px;
    border-top: 25px solid #f5f5f5;
}

.b-camera { left: 336px; top: 32px; width: 169px; --tail: 69px; }
.b-type { left: 223px; top: 163px; width: 227px; --tail: 99px; }
.b-amount { left: 472px; top: 169px; width: 240px; --tail: 105px; }
.b-filter { left: 26px; top: 25px; width: 247px; height: 88px; line-height: 23.4px; padding-top: 6px; --tail: 109px; }

.b-delay {
    left: 349px;
    top: 517px;
    width: 170px;
    height: 59px;
    padding-top: 4px;
}

.b-delay::before,
.b-delay::after {
    left: 100%;
    top: 14px;
    margin: 0;
    border-top: 14px solid transparent;
    border-bottom: 14px solid transparent;
    border-left: 25px solid #cfcfcf;
    border-right: 0;
}

.b-delay::after {
    top: 16px;
    margin-left: -2px;
    border-top-width: 12px;
    border-bottom-width: 12px;
    border-left: 23px solid #f5f5f5;
}

/* bottom bar */
.bottombar {
    height: 42px;
    display: flex;
    align-items: center;
    gap: 37.5px;
    padding-left: 11px;
    position: relative;
}

.bot {
    width: 20px;
    height: 20px;
    fill: currentColor;
    flex: none;
}

.bot.off {
    color: #5f5f5f;
}

.bot-select {
    margin-left: -18.5px;
}

.gen-overlap {
    margin-left: 20px;
}

.gen-tight {
    margin-left: -21px;
}

.bot-play {
    position: absolute;
    left: 796px;
    top: 7px;
    width: 28px;
    height: 28px;
    color: #eee;
}

.bright {
    fill: #eee;
}

.bot-power {
    position: absolute;
    left: 865px;
    top: 11px;
}

/* annotations */
.annotations {
    position: absolute;
    left: 0;
    top: 0;
    width: 1703px;
    height: 900px;
    z-index: 5;
    pointer-events: none;
}

.red-frame {
    fill: none;
    stroke: #ed1c24;
    stroke-width: 6px;
}

.red-arrow {
    fill: none;
    stroke: #ed1c24;
    stroke-width: 6px;
    stroke-linecap: round;
    stroke-linejoin: round;
}
```
